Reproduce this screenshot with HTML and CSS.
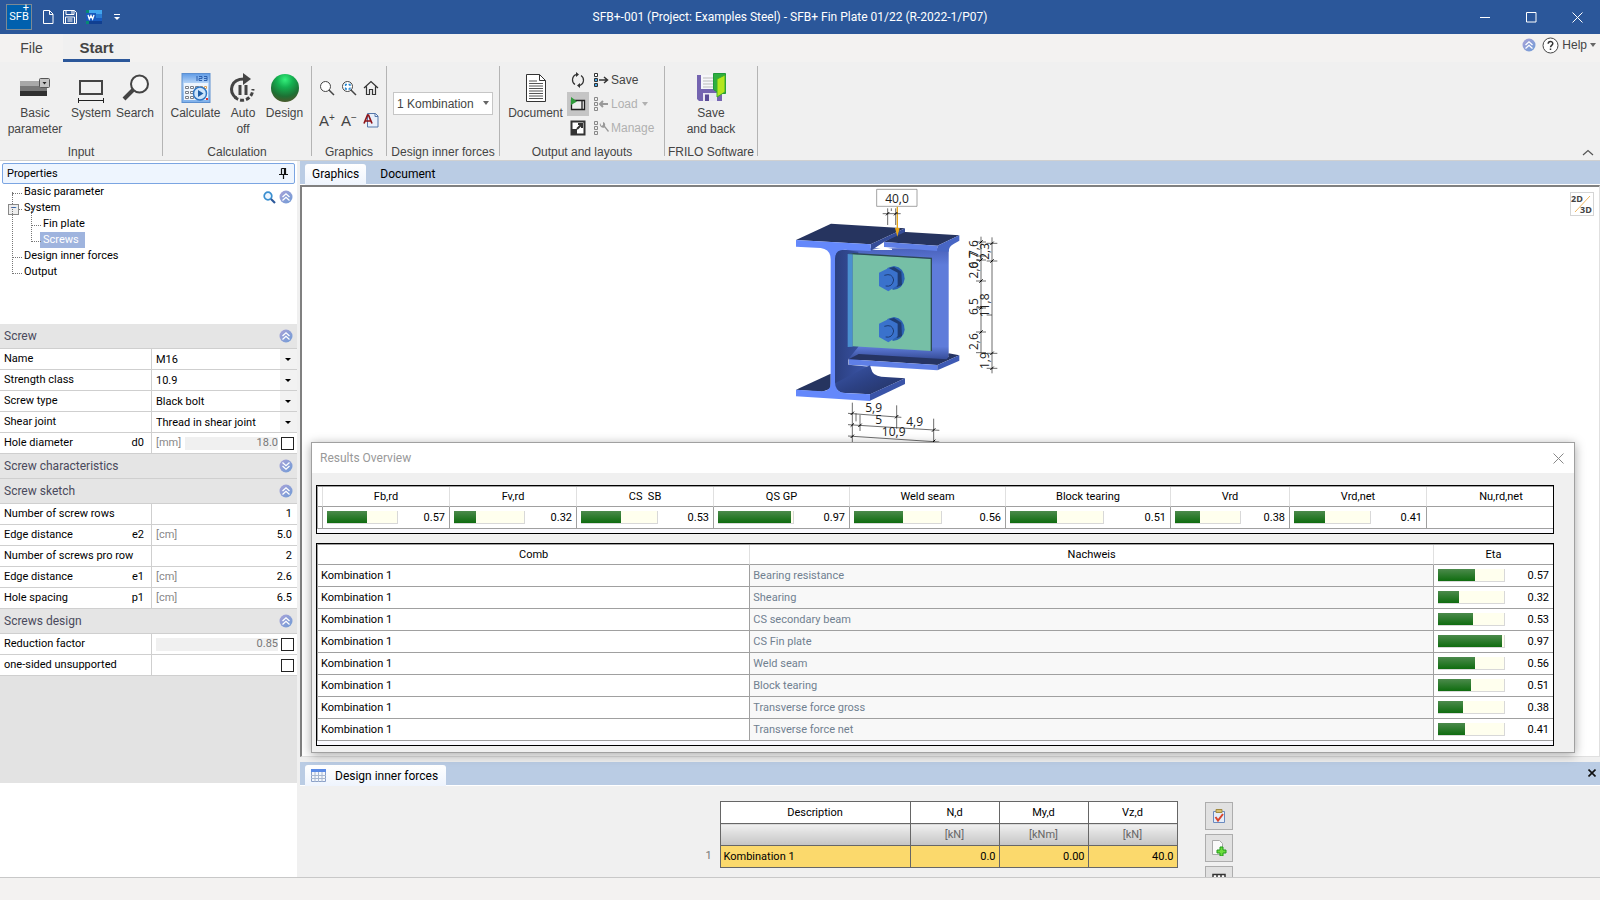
FILE: index.html
```html
<!DOCTYPE html>
<html lang="en">
<head>
  <meta charset="UTF-8">
  <meta name="viewport" content="width=device-width, initial-scale=1.0">
  <title>SFB+ Fin Plate</title>
  <link rel="stylesheet" href="styles.css">
</head>
<body>
  <!-- shared symbols -->
  <svg class="defs" width="0" height="0" aria-hidden="true">
    <defs>
      <linearGradient id="ringFill" x1="0" y1="0" x2="1" y2="1">
        <stop offset="0" stop-color="#a9a3d8"/><stop offset="1" stop-color="#6f9bd6"/>
      </linearGradient>
      <radialGradient id="ballFill" cx="50%" cy="20%" r="80%">
        <stop offset="0" stop-color="#35f07c"/><stop offset="0.35" stop-color="#14b050"/><stop offset="0.75" stop-color="#1e7034"/><stop offset="1" stop-color="#4a5a2c"/>
      </radialGradient>
      <linearGradient id="calcFill" x1="0" y1="0" x2="0" y2="1">
        <stop offset="0" stop-color="#5f9be6"/><stop offset="0.35" stop-color="#b9d6f7"/><stop offset="1" stop-color="#7fb0ea"/>
      </linearGradient>
    </defs>
    <symbol id="up" viewBox="0 0 14 14">
      <circle cx="7" cy="7" r="6.5" fill="url(#ringFill)"/>
      <path d="M3.5 7 7 3.8 10.500 7M3.500 10.500 7 7.300 10.500 10.500" fill="none" stroke="#fff" stroke-width="1.300"/>
    </symbol>
    <symbol id="down" viewBox="0 0 14 14">
      <circle cx="7" cy="7" r="6.5" fill="url(#ringFill)"/>
      <path d="M3.5 3.500 7 6.700 10.500 3.500M3.500 7 7 10.200 10.500 7" fill="none" stroke="#fff" stroke-width="1.300"/>
    </symbol>
  </svg>

  <header class="titlebar">
    <div class="quick">
      <span class="logo"><span class="plus">+</span><span>SFB</span></span>
      <button class="quick-btn" aria-label="New"><svg width="12" height="16" viewBox="0 0 12 16"><path d="M1.500 1.500h6l3.500 3.500v9.500h-9.500zM7.500 1.500v4h3.500" fill="none" stroke="#fff"/></svg></button>
      <button class="quick-btn" aria-label="Save"><svg width="16" height="16" viewBox="0 0 16 16"><path d="M1.500 1.500h11l2 2v11h-13zM4 1.500v4h8v-4M3.500 14v-6h9v6M5.500 10h5M5.500 12h5M10 2v3" fill="none" stroke="#fff"/></svg></button>
      <button class="quick-btn" aria-label="Word">
        <svg width="16" height="16" viewBox="0 0 16 16"><path d="M3 1h13v4H3z" fill="#41a5ee"/><path d="M3 5h13v4H3z" fill="#2b7cd3"/><path d="M3 9h13v3H3z" fill="#185abd"/><path d="M1 12h15v3H1z" fill="#103f91"/><path d="M0 1h3v3H0zM0 12h3v3H0z" fill="#078a73"/><path d="M0 4h10v8H0z" fill="#185abd"/><path d="M2 6l1.300 4L5 6.500 6.600 10 8 6" fill="none" stroke="#fff" stroke-width="1.300"/></svg>
      </button>
      <button class="quick-btn" aria-label="Customize"><svg width="6" height="8" viewBox="0 0 6 8"><path d="M0 1.500h6" stroke="#fff"/><path d="M0 4h6L3 7z" fill="#fff"/></svg></button>
    </div>
    <div class="title">SFB+-001 (Project: Examples Steel) - SFB+ Fin Plate 01/22 (R-2022-1/P07)</div>
    <div class="window-btns">
      <button aria-label="Minimize"><svg width="11" height="11" viewBox="0 0 11 11"><path d="M0 5.500h10" stroke="#fff"/></svg></button>
      <button aria-label="Maximize"><svg width="11" height="11" viewBox="0 0 11 11"><path d="M.5.500h9.500v9.500H.5z" fill="none" stroke="#fff"/></svg></button>
      <button aria-label="Close"><svg width="11" height="11" viewBox="0 0 11 11"><path d="M.5.500l10 10M10.500.500l-10 10" stroke="#fff"/></svg></button>
    </div>
  </header>

  <nav class="menu">
    <a class="menu-tab" href="#">File</a>
    <a class="menu-tab active" href="#">Start</a>
    <div class="menu-right">
      <button aria-label="Collapse"><svg width="14" height="14"><use href="#up"/></svg></button>
      <button class="help"><svg width="17" height="17" viewBox="0 0 17 17"><circle cx="8.500" cy="8.500" r="7.500" fill="#fff" stroke="#444"/><path d="M6.200 6.800c0-3 4.600-3 4.600-.2 0 1.700-2.300 1.800-2.300 3.600M8.500 11.400v1.600" fill="none" stroke="#333" stroke-width="1.500"/></svg>Help<i class="caret"></i></button>
    </div>
  </nav>

  <section class="ribbon">
    <div class="group g-input">
      <div class="tools">
        <button class="big w70"><svg width="32" height="32" viewBox="0 0 32 32"><path d="M1 9h27v5H1z" fill="#a8a8a8"/><path d="M1 14h27v5H1z" fill="#777"/><path d="M1 19h27v5H1z" fill="#303030"/><rect x="20.500" y="6.500" width="10" height="9" rx="1" fill="#c4c4c4" stroke="#555"/><path d="M23.500 10h4l-2 2.500z" fill="#222"/></svg><span>Basic<br>parameter</span></button>
        <button class="big w42"><svg width="32" height="32" viewBox="0 0 32 32"><path d="M5 9h22v13H5z" fill="none" stroke="#444" stroke-width="2"/><path d="M3 28.500h26M3.500 26v5M28.500 26v5" stroke="#222" stroke-width="1"/></svg>System</button>
        <button class="big w46"><svg width="32" height="32" viewBox="0 0 32 32"><circle cx="20.500" cy="12" r="8.500" fill="#f6f6f6" stroke="#444" stroke-width="2"/><path d="M14 18 5 27" stroke="#444" stroke-width="4"/></svg>Search</button>
      </div>
      <div class="group-name">Input</div>
    </div>
    <div class="group g-calc">
      <div class="tools">
        <button class="big w55"><svg width="32" height="32" viewBox="0 0 32 32"><rect x="2" y="1.500" width="28" height="29" fill="url(#calcFill)" stroke="#5c8fd0"/><path d="M4 11h24v17H4z" fill="#eef5fd"/><path d="M17 4v5M19 4.500h3v2h-3v2h3M24 4.500h3v4h-3M24 6.500h3" fill="none" stroke="#2b5fae"/><g fill="#fff" stroke="#7a7f88"><path d="M5.500 14.500h3v2h-3zM10.500 14.500h3v2h-3zM5.500 19.500h3v2h-3zM10.500 19.500h3v2h-3zM5.500 24.500h3v2h-3zM10.500 24.500h3v2h-3zM15.500 14.500h3v2h-3z"/><path d="M20.500 14.500h2v2h-2zM24.500 14.500h2v2h-2z" stroke="#e0a050"/></g><circle cx="20" cy="21.500" r="6.500" fill="#cfe5fa" stroke="#2f76c4" stroke-width="1.500"/><path d="M18 18v7l5.500-3.500z" fill="#1f5fa8"/><path d="M26 26h2v2h-2z" fill="#d33"/></svg>Calculate</button>
        <button class="big w40"><svg width="32" height="32" viewBox="0 0 32 32"><path d="M9 26C1 19 4 7 17 7" fill="none" stroke="#444" stroke-width="3"/><path d="M16 1l8 6-8 6z" fill="#444"/><path d="M13 13v10M19 13v10" stroke="#444" stroke-width="3"/><path d="M8 25c5 6 17 4 18-8" fill="none" stroke="#444" stroke-width="3" stroke-dasharray="4 2"/></svg><span>Auto<br>off</span></button>
        <button class="big w43"><svg width="32" height="32" viewBox="0 0 32 32"><circle cx="16" cy="16" r="14" fill="url(#ballFill)"/></svg>Design</button>
      </div>
      <div class="group-name">Calculation</div>
    </div>
    <div class="group g-graph">
      <div class="tools icon-grid">
        <button aria-label="Zoom"><svg width="16" height="16" viewBox="0 0 16 16"><circle cx="6.500" cy="6.500" r="5" fill="#fff" stroke="#444"/><path d="M10 10l5 5" stroke="#444" stroke-width="1.500"/></svg></button>
        <button aria-label="Zoom window"><svg width="16" height="16" viewBox="0 0 16 16"><circle cx="6.500" cy="6.500" r="5" fill="#fff" stroke="#444"/><path d="M10 10l5 5" stroke="#444" stroke-width="1.500"/><path d="M4.500 6V4.500H6M7.500 4.500H9V6M9 7.500V9H7.500M6 9H4.500V7.500" fill="none" stroke="#2a8ad4" stroke-width="1.300"/></svg></button>
        <button aria-label="Home"><svg width="16" height="16" viewBox="0 0 16 16"><path d="M1 8l7-6.500L15 8M3.500 6.500v8h3v-5h3v5h3v-8" fill="none" stroke="#333" stroke-width="1.200"/></svg></button>
        <button class="letter">A<sup>+</sup></button>
        <button class="letter">A<sup>−</sup></button>
        <button class="letter-doc" aria-label="Font"><svg width="16" height="16" viewBox="0 0 16 16"><path d="M4.500 1.500h8l2.500 2.500v11H4.500z" fill="#e8effa" stroke="#5577aa"/><path d="M12 1.500V4.500h3" fill="none" stroke="#5577aa"/><path d="M1 11.500 4.500 3h1L9 11.500M2.500 9h5" fill="none" stroke="#8e1418" stroke-width="1.700"/></svg></button>
      </div>
      <div class="group-name">Graphics</div>
    </div>
    <div class="group g-forces">
      <div class="tools">
        <label class="combo"><select aria-label="Combination"><option>1 Kombination</option></select><i class="caret"></i></label>
      </div>
      <div class="group-name">Design inner forces</div>
    </div>
    <div class="group g-output">
      <div class="tools">
        <button class="big w67"><svg width="32" height="32" viewBox="0 0 32 32"><path d="M6.500 2.500h13l6 6v21h-19z" fill="#fff" stroke="#333"/><path d="M19.500 2.500v6h6" fill="none" stroke="#333"/><path d="M9 11.500h14M9 14h14M9 16.500h14M9 19h14M9 21.500h14M9 24h14M9 26.500h14M9 9h8" stroke="#555"/></svg>Document</button>
        <div class="tool-list icons">
          <button aria-label="Refresh"><svg width="16" height="16" viewBox="0 0 16 16"><path d="M6 2.500a5.700 5.700 0 0 0-1 10M10 13.500a5.700 5.700 0 0 0 1-10" fill="none" stroke="#333" stroke-width="1.200"/><path d="M6 0l3 2.500L6 5zM10 11v5l-3-2.500z" fill="#333"/></svg></button>
          <button class="pressed" aria-label="Live view"><svg width="16" height="16" viewBox="0 0 16 16"><path d="M1.500 4.500h13v9h-13zM12 5v8" fill="#eee" stroke="#222" stroke-width="1.300"/><path d="M1 1l6 4.500L1 9z" fill="#2f9a3b"/></svg></button>
          <button aria-label="Full size"><svg width="16" height="16" viewBox="0 0 16 16"><path d="M1.500 1.500h13v13h-13z" fill="#fff" stroke="#333" stroke-width="2"/><path d="M2 9h5v5H2z" fill="#333"/><path d="M7 9l5-5M8 4h4v4" fill="none" stroke="#333" stroke-width="2"/></svg></button>
        </div>
        <div class="tool-list">
          <button><svg width="16" height="16" viewBox="0 0 16 16"><path d="M1.500 1.500h3v3h-3z" fill="#fff" stroke="#333"/><path d="M1.500 6.500h3v3h-3zM1.500 11.500h3v3h-3z" fill="#4aa8e8" stroke="#333"/><path d="M6 8h8M11 5l3.500 3-3.500 3" fill="none" stroke="#333" stroke-width="1.500"/></svg>Save</button>
          <button class="off" disabled><svg width="16" height="16" viewBox="0 0 16 16"><path d="M1.500 1.500h3v3h-3zM1.500 6.500h3v3h-3zM1.500 11.500h3v3h-3z" fill="#eee" stroke="#888"/><path d="M7 8h8M10 5L7 8l3 3" fill="none" stroke="#999" stroke-width="2"/></svg>Load<i class="caret"></i></button>
          <button class="off" disabled><svg width="16" height="16" viewBox="0 0 16 16"><path d="M1.500 1.500h3v3h-3zM1.500 6.500h3v3h-3zM1.500 11.500h3v3h-3z" fill="#eee" stroke="#888"/><path d="M7 3a3.500 3.500 0 0 0 4.500 4.500L15 12l1-1-4-5a3 3 0 0 0-2-4v3L8.500 6z" fill="#999"/></svg>Manage</button>
        </div>
      </div>
      <div class="group-name">Output and layouts</div>
    </div>
    <div class="group g-frilo">
      <div class="tools">
        <button class="big w93"><svg width="32" height="32" viewBox="0 0 32 32"><path d="M2 3h25v26H4l-2-2z" fill="#7464b0"/><path d="M6 3h14v14H6z" fill="#f6f6fa"/><path d="M8 6h10M8 9h10M8 12h10M8 15h10" stroke="#bbb"/><path d="M8 21h14v8H8z" fill="#e8e6f2"/><path d="M10 22.500h4V29h-4z" fill="#5a4b96"/><path d="M18.500 1.500h12v20h-6l-6-4z" fill="#2fae3f" stroke="#1f9a3a"/><path d="M22 7l8-4v17l-8 5z" fill="#b4e61e" stroke="#3fae2a"/></svg><span>Save<br>and back</span></button>
      </div>
      <div class="group-name">FRILO Software</div>
    </div>
    <button class="ribbon-fold" aria-label="Fold ribbon"><svg width="12" height="7" viewBox="0 0 12 7"><path d="M1 6l5-4.500L11 6" fill="none" stroke="#555" stroke-width="1.200"/></svg></button>
  </section>

  <main class="workspace">
    <aside class="panel">
      <h2 class="panel-title">Properties<svg width="9" height="11" viewBox="0 0 9 11"><path d="M2.500.500h4v6M2.500.500v6M5.500 1v5M0 6.500h9M4.500 7v4" fill="none" stroke="#111" stroke-width="1.200"/></svg></h2>
      <div class="nav-tree">
        <ul class="tree">
          <li><a href="#">Basic parameter</a></li>
          <li class="open"><a href="#">System</a>
            <ul>
              <li><a href="#">Fin plate</a></li>
              <li><a class="selected" href="#">Screws</a></li>
            </ul>
          </li>
          <li><a href="#">Design inner forces</a></li>
          <li><a href="#">Output</a></li>
        </ul>
        <div class="tree-tools">
          <button aria-label="Find"><svg width="13" height="13" viewBox="0 0 13 13"><circle cx="5" cy="5" r="3.800" fill="#eef6ff" stroke="#3b8fd0" stroke-width="1.700"/><path d="M8 8l4 4" stroke="#2b579a" stroke-width="2.200"/></svg></button>
          <button aria-label="Collapse all"><svg width="14" height="14"><use href="#up"/></svg></button>
        </div>
      </div>
      <div class="props">
        <h3>Screw<svg width="14" height="14"><use href="#up"/></svg></h3>
        <div class="row"><label for="name">Name</label><div class="val pick"><select id="name"><option>M16</option></select></div></div>
        <div class="row"><label for="class">Strength class</label><div class="val pick"><select id="class"><option>10.9</option></select></div></div>
        <div class="row"><label for="type">Screw type</label><div class="val pick"><select id="type"><option>Black bolt</option></select></div></div>
        <div class="row"><label for="shear">Shear joint</label><div class="val pick"><select id="shear"><option>Thread in shear joint</option></select></div></div>
        <div class="row"><label for="d0">Hole diameter<b>d0</b></label><div class="val"><span class="unit">[mm]</span><input class="locked" id="d0" value="18.0" disabled><input type="checkbox" aria-label="Set hole diameter"></div></div>
        <h3>Screw characteristics<svg width="14" height="14"><use href="#down"/></svg></h3>
        <h3>Screw sketch<svg width="14" height="14"><use href="#up"/></svg></h3>
        <div class="row"><label for="rows">Number of screw rows</label><div class="val"><input id="rows" value="1"></div></div>
        <div class="row"><label for="e2">Edge distance<b>e2</b></label><div class="val"><span class="unit">[cm]</span><input id="e2" value="5.0"></div></div>
        <div class="row"><label for="perrow">Number of screws pro row</label><div class="val"><input id="perrow" value="2"></div></div>
        <div class="row"><label for="e1">Edge distance<b>e1</b></label><div class="val"><span class="unit">[cm]</span><input id="e1" value="2.6"></div></div>
        <div class="row"><label for="p1">Hole spacing<b>p1</b></label><div class="val"><span class="unit">[cm]</span><input id="p1" value="6.5"></div></div>
        <h3>Screws design<svg width="14" height="14"><use href="#up"/></svg></h3>
        <div class="row"><label for="red">Reduction factor</label><div class="val"><input class="locked" id="red" value="0.85" disabled><input type="checkbox" aria-label="Set reduction factor"></div></div>
        <div class="row"><label for="one">one-sided unsupported</label><div class="val end"><input type="checkbox" id="one"></div></div>
      </div>
    </aside>

    <section class="content">
      <div class="strip">
        <a class="tab active" href="#">Graphics</a>
        <a class="tab" href="#">Document</a>
      </div>
      <div class="view">
        <svg class="model" width="240" height="256" viewBox="0 21 720 768">
          <defs>
            <linearGradient id="webShade" x1="0" x2="1" y1="0" y2="0"><stop offset="0" stop-color="#2b3f80"/><stop offset="1" stop-color="#3c57ab"/></linearGradient>
            <linearGradient id="footShade" x1="0" x2="1" y1="0" y2="1"><stop offset="0" stop-color="#3c57ab"/><stop offset="0.500" stop-color="#2c4184"/><stop offset="1" stop-color="#24325f"/></linearGradient>
            <linearGradient id="beamWeb" x1="0" x2="0" y1="0" y2="1"><stop offset="0" stop-color="#4a62bc"/><stop offset="0.150" stop-color="#5f7cda"/><stop offset="0.880" stop-color="#5f7cda"/><stop offset="1" stop-color="#344a94"/></linearGradient>
          </defs>
          <!-- secondary beam -->
          <path d="M200 205h290l16 5v330l-300 0z" fill="url(#beamWeb)"/>
          <path d="M312 186 365 155 538 166 472 197z" fill="#26345f"/>
          <path d="M312 186 472 197v16L312 201z" fill="#5f7fe6"/>
          <path d="M472 197 538 166v16l-16 9q-16 8-16 24l-34-2z" fill="#4866c4"/>
          <path d="M270 211l42-9 24 4v4h-66z" fill="#fff"/>
          <path d="M206 538l30-16 264 16 6-8q-2-6 0-10l32 6-66 29z" fill="#263463"/>
          <path d="M206 538 472 555v16L206 554z" fill="#5f7fe6"/>
          <path d="M472 555 538 526v16l-66 29z" fill="#3e5ab4"/>
          <!-- main beam -->
          <path d="M165 225q2-18 30-16l40 6v285l-30 38v16l65 6q-50 50-105 70z" fill="url(#webShade)"/>
          <path d="M48 629 152 581v45l-26 9z" fill="#26345f"/>
          <path d="M165 610l105-54 4 12q4 20 30 22l71 5-104 48-88-5q-18-8-18-28z" fill="url(#footShade)"/>
          <path d="M270 643 375 595v17l-105 50z" fill="#3a54a8"/>
          <path d="M48 180 153 131 375 145 272 193z" fill="#26345f"/>
          <path d="M272 193 375 145v11l-63 30-40 26z" fill="#354c98"/>
          <path d="M48 180 272 193v20l-80-4q-27 0-27 28v370q0 28 27 32l78 4v20L48 649v-20l78 5q26 0 26-24V238q0-30-30-34l-74-4z" fill="#6488fb"/>
          <!-- fin plate -->
          <path d="M203 222 218 220v280l-15 1z" fill="#4a90d0"/>
          <path d="M218 222 453 236V513L218 499z" fill="#76bfa6"/>
          <path d="M203 222 222 219 456 233v280l-4 1V237z" fill="#2c4a54"/>
          <!-- screws -->
          <g id="screw">
            <path d="M322 264 342 258q30 4 32 38-4 30-36 34z" fill="#2c62b4"/>
            <path d="M326 264l16-3 22 14 2 40-14 6-20-24z" fill="#1f3d72"/>
            <path d="M297 278 326 264l27 14v38l-28 18-28-16z" fill="#3a72cc"/>
            <path d="M313 286q24-8 28 14-4 22-24 18" fill="none" stroke="#1d3c74" stroke-width="3"/>
          </g>
          <use href="#screw" y="153"/>
          <!-- load -->
          <path d="M290 28h121v51H290z" fill="#fff" stroke="#777" stroke-width="2"/>
          <path d="M352 80v66" stroke="#e8a615" stroke-width="4"/>
          <path d="M345 144h14l-7 26z" fill="#e8a615"/>
          <g class="dim-lines">
            <path d="M308 101h54M323 85v50M347 85v50M334 85v8"/>
            <path d="M603 170v350M636 172v408M588 186h30M620 190h32M588 228h30M588 240h30M620 243h32M588 303h30M588 384h30M588 456h30M588 518h30M620 520h32M620 565h32M620 405h16"/>
            <path d="M217 668v118M350 676v70M461 716v72M240 705v48M228 700v24M204 700l160 12M204 734l274 17M204 768l274 18"/>
          </g>
          <g class="dim-ticks">
            <path d="M318 106l10-10M342 106l10-10M212 705l10-10M345 715l10-10M212 740l10-10M235 741l10-10M456 755l10-10M212 774l10-10M456 789l10-10M598 191l10-10M631 195l10-10M598 245l10-10M631 248l10-10M598 308l10-10M598 389l10-10M598 461l10-10M631 525l10-10M631 570l10-10"/>
          </g>
          <g class="dim-text">
            <text x="351" y="69">40,0</text>
            <text x="281" y="696">5,9</text>
            <text x="296" y="732">5</text>
            <text x="404" y="737">4,9</text>
            <text x="341" y="768">10,9</text>
            <text transform="translate(594 206) rotate(-90)">7,6</text>
            <text transform="translate(594 240) rotate(-90)">0,7</text>
            <text transform="translate(628 214) rotate(-90)">2,3</text>
            <text transform="translate(594 270) rotate(-90)">2,6</text>
            <text transform="translate(594 380) rotate(-90)">6,5</text>
            <text transform="translate(628 376) rotate(-90)">11,8</text>
            <text transform="translate(594 485) rotate(-90)">2,6</text>
            <text transform="translate(628 542) rotate(-90)">1,9</text>
          </g>
        </svg>
        <button class="mode" aria-label="2D/3D"><svg width="22" height="22" viewBox="0 0 22 22"><path d="M4 19 19 3" stroke="#f0b860"/><text x="0" y="9">2D</text><text x="9" y="20">3D</text></svg></button>

        <div class="dialog">
          <div class="dialog-title">Results Overview<button aria-label="Close"><svg width="11" height="11" viewBox="0 0 11 11"><path d="M.5.500l10 10M10.500.500l-10 10" stroke="#888"/></svg></button></div>
          <div class="dialog-body">
            <div class="grid-box">
              <table class="summary">
                <colgroup><col class="c5"><col class="c127"><col class="c127"><col class="c137"><col class="c136"><col class="c156"><col class="c165"><col class="c119"><col class="c137"><col></colgroup>
                <tr><th></th><th>Fb,rd</th><th>Fv,rd</th><th>CS&nbsp; SB</th><th>QS GP</th><th>Weld seam</th><th>Block tearing</th><th>Vrd</th><th>Vrd,net</th><th class="cut">Nu,rd,net</th></tr>
                <tr>
                  <td></td>
                  <td><div class="use"><span class="bar"><i style="width:57%"></i></span>0.57</div></td>
                  <td><div class="use"><span class="bar"><i style="width:32%"></i></span>0.32</div></td>
                  <td><div class="use"><span class="bar"><i style="width:53%"></i></span>0.53</div></td>
                  <td><div class="use"><span class="bar"><i style="width:97%"></i></span>0.97</div></td>
                  <td><div class="use"><span class="bar"><i style="width:56%"></i></span>0.56</div></td>
                  <td><div class="use"><span class="bar"><i style="width:51%"></i></span>0.51</div></td>
                  <td><div class="use"><span class="bar"><i style="width:38%"></i></span>0.38</div></td>
                  <td><div class="use"><span class="bar"><i style="width:41%"></i></span>0.41</div></td>
                  <td></td>
                </tr>
              </table>
            </div>
            <div class="grid-box">
              <table class="checks">
                <colgroup><col class="c-comb"><col><col class="c119"></colgroup>
                <tr><th>Comb</th><th>Nachweis</th><th>Eta</th></tr>
                <tr><td>Kombination 1</td><td>Bearing resistance</td><td><div class="use"><span class="bar"><i style="width:57%"></i></span>0.57</div></td></tr>
                <tr><td>Kombination 1</td><td>Shearing</td><td><div class="use"><span class="bar"><i style="width:32%"></i></span>0.32</div></td></tr>
                <tr><td>Kombination 1</td><td>CS secondary beam</td><td><div class="use"><span class="bar"><i style="width:53%"></i></span>0.53</div></td></tr>
                <tr><td>Kombination 1</td><td>CS Fin plate</td><td><div class="use"><span class="bar"><i style="width:97%"></i></span>0.97</div></td></tr>
                <tr><td>Kombination 1</td><td>Weld seam</td><td><div class="use"><span class="bar"><i style="width:56%"></i></span>0.56</div></td></tr>
                <tr><td>Kombination 1</td><td>Block tearing</td><td><div class="use"><span class="bar"><i style="width:51%"></i></span>0.51</div></td></tr>
                <tr><td>Kombination 1</td><td>Transverse force gross</td><td><div class="use"><span class="bar"><i style="width:38%"></i></span>0.38</div></td></tr>
                <tr><td>Kombination 1</td><td>Transverse force net</td><td><div class="use"><span class="bar"><i style="width:41%"></i></span>0.41</div></td></tr>
              </table>
            </div>
          </div>
        </div>
      </div>

      <div class="dock">
        <div class="strip">
          <a class="tab active wide" href="#"><svg width="15" height="13" viewBox="0 0 15 13"><path d="M.5.500h14v12H.5z" fill="#f4f7fc" stroke="#8aa0c8"/><path d="M0 0h15v3H0z" fill="#5a8ae6"/><path d="M4 3v10M7.500 3v10M11 3v10M0 6.500h15M0 9.500h15" stroke="#a8b8d0"/></svg>Design inner forces</a>
          <button class="dock-close" aria-label="Close"><svg width="8" height="8" viewBox="0 0 8 8"><path d="M.5.500l7 7M7.500.500l-7 7" stroke="#111" stroke-width="1.600"/></svg></button>
        </div>
        <div class="dock-body">
          <span class="row-no">1</span>
          <table class="forces">
            <colgroup><col class="c-desc"><col class="c-num"><col class="c-num"><col class="c-num"></colgroup>
            <tr><th>Description</th><th>N,d</th><th>My,d</th><th>Vz,d</th></tr>
            <tr class="units"><td></td><td>[kN]</td><td>[kNm]</td><td>[kN]</td></tr>
            <tr class="picked"><td>Kombination 1</td><td>0.0</td><td>0.00</td><td>40.0</td></tr>
          </table>
          <div class="dock-btns">
            <button aria-label="Check"><svg width="16" height="16" viewBox="0 0 16 16"><path d="M2.500 3.500h11v11h-11z" fill="#e4edf9" stroke="#6a8abf"/><path d="M5 1.500h6v3H5z" fill="#d8c070" stroke="#a08a40"/><path d="M4.500 9l2.500 3.500L12 6" fill="none" stroke="#d8452c" stroke-width="2"/></svg></button>
            <button aria-label="Add"><svg width="16" height="16" viewBox="0 0 16 16"><path d="M1.500.500h7l3 3v11h-10z" fill="#fafafa" stroke="#aaa"/><path d="M9 7h3v3h3v3h-3v3H9v-3H6v-3h3z" fill="#6bdc3c" stroke="#229a1c"/></svg></button>
            <button aria-label="Table"><svg width="14" height="14" viewBox="0 0 14 14"><path d="M1 1.500h12v4H1zM5 2v3M9 2v3M4 9.500h9" fill="#fff" stroke="#333" stroke-width="1.500"/></svg></button>
          </div>
        </div>
      </div>
    </section>
  </main>
  <footer class="status"></footer>
</body>
</html>
```
FILE: styles.css
```css
* {
  box-sizing: border-box;
}
body {
  margin: 0;
  height: 100vh;
  display: flex;
  flex-direction: column;
  overflow: hidden;
  font-family: Roboto, "Liberation Sans", sans-serif;
  font-size: 11px;
  color: #000;
  background-color: #f0f0f0;
}
button {
  font: inherit;
  color: inherit;
  border: 0;
  padding: 0;
  background: none;
}
a {
  color: inherit;
  text-decoration: none;
}
svg {
  flex: none;
  display: block;
}
.defs {
  position: absolute;
}
.caret {
  border: 3px solid transparent;
  border-top: 4px solid #666;
  border-bottom: 0;
}

/* title bar */
.titlebar {
  height: 34px;
  flex: none;
  display: grid;
  grid-template-columns: 1fr auto 1fr;
  align-items: center;
  background-color: #2b579a;
  color: #fff;
  font-size: 12px;
}
.quick {
  display: flex;
  align-items: center;
  gap: 8px;
  padding-left: 6px;
}
.quick-btn:nth-child(5) {
  margin-left: 4px;
}
.logo {
  width: 26px;
  height: 26px;
  display: flex;
  flex-direction: column;
  align-items: center;
  border: 1px solid #7d8a94;
  background-color: #0060ae;
  font-size: 11px;
  line-height: 12px;
  margin-right: 2px;
}
.logo .plus {
  align-self: flex-end;
  margin-right: 2px;
  line-height: 6px;
}
.title {
  padding-right: 20px;
}
.window-btns {
  display: flex;
  justify-content: flex-end;
}
.window-btns button {
  width: 46px;
  display: flex;
  justify-content: center;
}

/* menu tabs */
.menu {
  height: 28px;
  flex: none;
  display: flex;
  background-color: #f3f2f1;
  font-family: "Liberation Sans", sans-serif;
  font-size: 14px;
  color: #444;
}
.menu-tab {
  width: 63px;
  line-height: 28px;
  text-align: center;
}
.menu-tab.active {
  width: 67px;
  border-bottom: 3px solid #2b579a;
  background-color: #f0f0f0;
  font-size: 15px;
  font-weight: bold;
}
.menu-right {
  margin-left: auto;
  display: flex;
  align-items: center;
  gap: 6px;
  padding: 0 4px 6px 0;
  font-size: 12px;
}
.help {
  display: flex;
  align-items: center;
  gap: 3px;
}

/* ribbon */
.ribbon {
  height: 99px;
  flex: none;
  display: flex;
  border-bottom: 1px solid #d0d0d0;
  font-family: "Liberation Sans", sans-serif;
  font-size: 12px;
  color: #444;
}
.group {
  display: flex;
  flex-direction: column;
  margin: 4px 0;
  border-right: 1px solid #b4b4b4;
}
.tools {
  flex: 1;
  display: flex;
  align-items: flex-start;
  padding-top: 6px;
}
.group-name {
  line-height: 16px;
  margin-bottom: -4px;
  text-align: center;
  white-space: nowrap;
}
.big {
  display: flex;
  flex-direction: column;
  align-items: center;
  line-height: 16px;
  gap: 1px;
}
.g-input { width: 163px; }
.g-calc { width: 149px; }
.g-graph { width: 75px; }
.g-forces { width: 113px; }
.g-output { width: 165px; }
.g-frilo { width: 93px; }
.g-calc .tools {
  padding-left: 5px;
}
.w40 { width: 40px; }
.w42 { width: 42px; }
.w43 { width: 43px; }
.w46 { width: 46px; }
.w55 { width: 55px; }
.w67 { width: 67px; }
.w70 { width: 70px; }
.w93 { width: 92px; }
.icon-grid {
  display: grid;
  grid-template-columns: repeat(3, 22px);
  grid-auto-rows: 32px;
  justify-content: center;
  align-content: start;
  align-items: center;
}
.icon-grid button {
  display: flex;
  align-items: center;
  justify-content: center;
}
.letter {
  font-size: 15px;
}
.letter sup {
  font-size: 10px;
  margin-bottom: 6px;
}
.combo {
  flex: 1;
  margin: 20px 6px 0;
  position: relative;
}
.combo select {
  appearance: none;
  width: 100%;
  height: 23px;
  padding: 0 3px;
  border: 1px solid #c6c6c6;
  border-radius: 0;
  background-color: #fff;
  color: #444;
  font: inherit;
}
.combo .caret {
  position: absolute;
  right: 4px;
  top: 9px;
}
.g-output .tools {
  padding-top: 2px;
}
.g-output .big {
  padding: 4px 0 0 4px;
}
.tool-list button {
  height: 24px;
  display: flex;
  align-items: center;
  gap: 2px;
}
.tool-list.icons {
  width: 22px;
  margin-right: 4px;
}
.tool-list.icons button {
  width: 22px;
  justify-content: center;
}
.tool-list .caret {
  margin-left: 2px;
  border-top-color: #b0b0b0;
}
.pressed {
  background-color: #c5c5c5;
}
.tool-list .off {
  color: #b0b0b0;
}
.ribbon-fold {
  margin: auto 6px 4px auto;
}

/* properties panel */
.workspace {
  flex: 1;
  min-height: 0;
  display: grid;
  grid-template-columns: 297px 1fr;
  column-gap: 3px;
}
.panel {
  display: flex;
  flex-direction: column;
  background-color: #fff;
  padding-bottom: 94px;
}
.panel-title {
  display: flex;
  align-items: center;
  justify-content: space-between;
  height: 21px;
  margin: 2px 2px 0;
  padding: 0 6px 0 4px;
  border: 1px solid #7ba5e2;
  border-radius: 2px;
  background-color: #eef5fe;
  font-size: 11px;
  font-weight: normal;
}
.nav-tree {
  height: 140px;
  flex: none;
  position: relative;
}
.tree,
.tree ul {
  list-style: none;
  margin: 0;
  padding: 0;
}
.tree li {
  position: relative;
  padding-left: 12px;
  line-height: 16px;
}
.tree > li {
  margin-left: 12px;
}
.tree ul {
  margin-left: 7px;
}
.tree li::before {
  content: "";
  position: absolute;
  left: 0;
  top: -7px;
  width: 9px;
  height: 16px;
  border-left: 1px dotted #777;
  border-bottom: 1px dotted #777;
}
.tree > li:first-child::before {
  top: 8px;
  height: 1px;
}
.tree > .open + li::before {
  top: -39px;
  height: 48px;
}
.tree > .open::after {
  content: "–";
  position: absolute;
  left: -4px;
  top: 4px;
  width: 9px;
  height: 9px;
  border: 1px solid #888;
  background-color: #eee;
  color: #2b579a;
  font-size: 10px;
  line-height: 6px;
  text-align: center;
}
.tree .selected {
  display: inline-block;
  margin-left: -3px;
  padding: 0 6px 0 3px;
  background-color: #9fb4de;
  color: #fff;
}
.tree-tools {
  position: absolute;
  top: 6px;
  right: 4px;
  display: flex;
  gap: 3px;
}
.props {
  flex: 1;
  background-color: #e3e3e3;
}
.props h3 {
  display: flex;
  align-items: center;
  justify-content: space-between;
  height: 25px;
  margin: 0;
  padding: 0 4px;
  border-bottom: 1px solid #cfcfcf;
  background-color: #e5e5e5;
  color: #4a4a5c;
  font-size: 12px;
  font-weight: normal;
}
.row {
  display: grid;
  grid-template-columns: 151px 1fr;
  height: 21px;
  border-bottom: 1px solid #cfcfcf;
  background-color: #fff;
  line-height: 20px;
}
.row label {
  display: flex;
  justify-content: space-between;
  padding: 0 7px 0 4px;
  white-space: nowrap;
}
.row b {
  font-weight: normal;
}
.val {
  display: flex;
  align-items: center;
  min-width: 0;
  padding: 0 3px 0 4px;
  border-left: 1px solid #cfcfcf;
  position: relative;
}
.val.end {
  justify-content: flex-end;
}
.val input,
.val select {
  flex: 1;
  min-width: 0;
  height: 18px;
  border: 0;
  padding: 0 2px 0 0;
  background: none;
  color: #000;
  font: inherit;
  text-align: right;
}
.val select {
  appearance: none;
  text-align: left;
}
.val.pick::after {
  content: "";
  position: absolute;
  right: 6px;
  top: 9px;
  border: 3px solid transparent;
  border-top-color: #000;
  border-bottom: 0;
}
.val.pick {
  background: linear-gradient(#f2f2f2, #f2f2f2) right / 17px 100% no-repeat;
}
.val .locked {
  height: 13px;
  margin: 0 3px 0 0;
  padding: 0;
  background-color: #f0f0f0;
  color: #777;
}
.val input[type="checkbox"] {
  appearance: none;
  flex: none;
  width: 13px;
  height: 13px;
  margin: 0;
  border: 1px solid #222;
  background-color: #fff;
}
.unit {
  color: #888;
  margin-right: 4px;
}

/* graphics view */
.content {
  display: flex;
  flex-direction: column;
  min-width: 0;
  min-height: 0;
}
.strip {
  display: flex;
  height: 24px;
  flex: none;
  padding: 3px 0 0 5px;
  background-color: #bacce4;
  border-bottom: 1px solid #fff;
}
.tab {
  height: 21px;
  padding: 0 7px;
  line-height: 20px;
  font-size: 12px;
}
.tab.active {
  margin-right: 7px;
  border-radius: 3px 3px 0 0;
  background: linear-gradient(#fff, #eef4fd);
}
.tab.wide {
  display: flex;
  align-items: center;
  gap: 9px;
  padding: 0 8px 0 6px;
}
.dock-close {
  margin: 0 4px 4px auto;
}
.view {
  flex: 1;
  min-height: 0;
  display: flex;
  justify-content: center;
  position: relative;
  border: 1px solid #e0e0e0;
  border-top: 2px solid #808080;
  border-left: 2px solid #808080;
  background-color: #fff;
}
.model {
  margin-right: 102px;
}
.dim-lines path {
  fill: none;
  stroke: #222;
  stroke-width: 2;
}
.dim-ticks path {
  stroke: #000;
  stroke-width: 3;
}
.dim-text {
  font-family: "Open Sans", sans-serif;
  font-size: 36px;
  fill: #222;
  text-anchor: middle;
}
.mode {
  position: absolute;
  top: 5px;
  right: 5px;
  border: 1px solid #d5d5d5;
  background-color: #fff;
}
.mode text {
  font-family: "Open Sans", sans-serif;
  font-size: 9px;
  font-weight: bold;
  fill: #444;
}

/* results dialog */
.dialog {
  position: absolute;
  top: 255px;
  left: 9px;
  right: 24px;
  border: 1px solid #a0a0a0;
  background-color: #f0f0f0;
  box-shadow: 0 2px 10px rgba(0,0,0,0.35);
}
.dialog-title {
  display: flex;
  align-items: center;
  justify-content: space-between;
  height: 30px;
  padding: 0 10px 0 8px;
  background-color: #fff;
  color: #999;
  font-size: 12px;
}
.dialog-body {
  display: flex;
  flex-direction: column;
  gap: 9px;
  padding: 12px 20px 6px 4px;
}
.grid-box {
  border: 1px solid #000;
  padding-bottom: 4px;
  background-color: #fafaff;
}
.grid-box table {
  width: 100%;
  table-layout: fixed;
  border-collapse: separate;
  border-spacing: 0;
  border-top: 1px solid #a0a0a0;
  border-left: 1px solid #a0a0a0;
  background-color: #fff;
}
.grid-box th {
  height: 20px;
  padding: 0;
  border-right: 1px solid #e0e0e0;
  border-bottom: 1px solid #a0a0a0;
  font-weight: normal;
}
.grid-box td {
  height: 22px;
  padding: 0 4px;
  border-right: 1px solid #a0a0a0;
  border-bottom: 1px solid #a0a0a0;
}
.grid-box tr > :last-child {
  border-right: 0;
}
.grid-box td:first-child {
  padding: 0 3px;
}
.summary td:first-child {
  padding: 0;
}
.summary .cut {
  padding-left: 22px;
}
.c5 { width: 5px; }
.c119 { width: 119px; }
.c127 { width: 127px; }
.c136 { width: 136px; }
.c137 { width: 137px; }
.c156 { width: 156px; }
.c165 { width: 165px; }
.c-comb { width: 35%; }
.checks td:nth-child(2) {
  background-color: #f8f8f8;
  color: #708090;
  padding: 0 3px;
}
.use {
  display: flex;
  align-items: center;
  justify-content: space-between;
}
.bar {
  width: 60%;
  height: 13px;
  border-right: 1px solid #d8d8d8;
  border-bottom: 1px solid #d8d8d8;
  background-color: #ffffee;
}
.bar i {
  display: block;
  height: 12px;
  background: linear-gradient(#4c8a4c, #0f6c0f);
}

/* dock */
.dock {
  height: 115px;
  flex: none;
  margin-top: 5px;
  overflow: hidden;
}
.dock-body {
  display: flex;
  justify-content: center;
  align-items: flex-start;
  padding-top: 15px;
  padding-left: 38px;
}
.row-no {
  width: 14px;
  margin-top: 44px;
  line-height: 22px;
  color: #777;
}
.forces {
  width: 458px;
  table-layout: fixed;
  border-collapse: collapse;
  background-color: #fff;
}
.forces th,
.forces td {
  height: 22px;
  padding: 0 3px;
  border: 1px solid #666;
  font-weight: normal;
  text-align: center;
}
.c-desc { width: 190px; }
.c-num { width: 89px; }
.forces .units td {
  background: linear-gradient(#f0f0f0, #c4c4c4);
  color: #666;
}
.forces .picked td {
  background-color: #fbd96c;
  text-align: right;
}
.forces .picked td:first-child {
  text-align: left;
}
.dock-btns {
  display: flex;
  flex-direction: column;
  gap: 4px;
  margin: 1px 0 0 27px;
}
.dock-btns button {
  width: 28px;
  height: 28px;
  display: flex;
  align-items: center;
  justify-content: center;
  border: 1px solid #adadad;
  background-color: #e1e1e1;
}

.status {
  height: 23px;
  flex: none;
  border-top: 1px solid #c8c8c8;
  background-color: #f3f2f1;
  position: relative;
}
```
